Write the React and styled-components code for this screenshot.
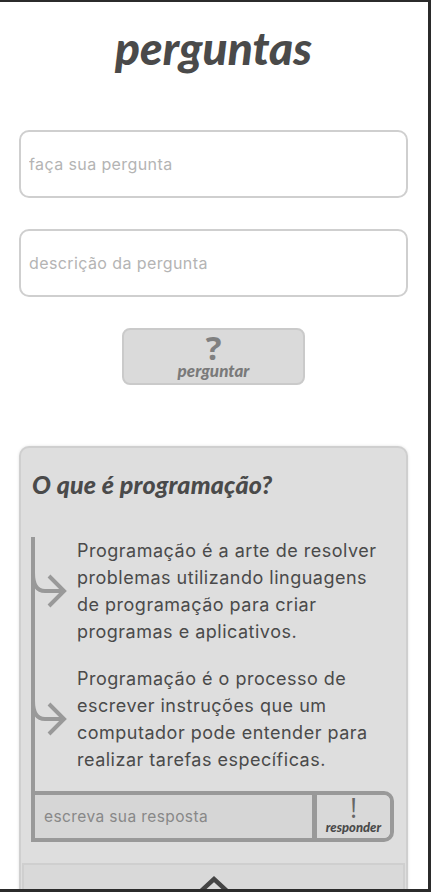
import styled, {createGlobalStyle} from 'styled-components'

const GlobalStyle = createGlobalStyle`
  html, body {
    margin: 0;
    padding: 0;
    background: #fff;
  }
  * {
    box-sizing: border-box;
  }
`

const answers = [
    'Programação é a arte de resolver problemas utilizando linguagens de programação para criar programas e aplicativos.',
    'Programação é o processo de escrever instruções que um computador pode entender para realizar tarefas específicas.',
]

const BranchArrow = () => (
    <svg width="42" height="40" viewBox="0 0 42 40">
        <path d="M2 2 Q2 20 14 20 L33 20" fill="none" stroke="#999" strokeWidth="4"/>
        <path d="M18 5 L33 20 L18 35" fill="none" stroke="#999" strokeWidth="4"/>
    </svg>
)

const App = () => {
    return (
        <Frame>
            <GlobalStyle/>
            <Title>perguntas</Title>
            <Form>
                <Field placeholder="faça sua pergunta"/>
                <Field placeholder="descrição da pergunta"/>
                <AskButton>
                    <Mark>?</Mark>
                    <ButtonLabel>perguntar</ButtonLabel>
                </AskButton>
            </Form>
            <Card>
                <CardTitle>O que é programação?</CardTitle>
                <Thread>
                    {answers.map((text, index) =>
                        <Answer key={index}>
                            <ArrowSlot><BranchArrow/></ArrowSlot>
                            <AnswerText>{text}</AnswerText>
                        </Answer>
                    )}
                    <Reply>
                        <ReplyInput placeholder="escreva sua resposta"/>
                        <ReplyButton>
                            <ReplyMark>!</ReplyMark>
                            <ReplyLabel>responder</ReplyLabel>
                        </ReplyButton>
                    </Reply>
                </Thread>
                <Collapse>
                    <svg width="34" height="20" viewBox="0 0 34 20">
                        <path d="M3 18 L17 5 L31 18" fill="none" stroke="#444" strokeWidth="4.5"/>
                    </svg>
                </Collapse>
            </Card>
        </Frame>
    )
}

export default App


const Frame = styled.div`
  height: 892px;
  overflow: hidden;
  border-top: 2px solid #2b2b2b;
  border-right: 3px solid #2b2b2b;
  border-bottom: 3px solid #2b2b2b;
  padding: 0 20px 0 19px;
  font-family: Inter, "Open Sans", sans-serif;
`

const Title = styled.h1`
  margin: 18px 0 0;
  text-align: center;
  font-family: Lato, sans-serif;
  font-weight: 900;
  font-style: italic;
  font-size: 46px;
  line-height: 56px;
  color: #4a4a4a;
`

const Form = styled.div`
  display: flex;
  flex-direction: column;
  align-items: center;
  gap: 31px;
  margin-top: 54px;
`

const Field = styled.input`
  width: 100%;
  height: 68px;
  border: 2px solid #cfcfcf;
  border-radius: 10px;
  padding: 0 8px;
  font-family: Inter, sans-serif;
  font-size: 16px;
  letter-spacing: 0.4px;
  color: #555;
  background: #fff;
  outline: none;

  &::placeholder {
    color: #b4b4b4;
  }
`

const AskButton = styled.button`
  width: 183px;
  height: 57px;
  background: #dadada;
  border: 2px solid #cacaca;
  border-radius: 8px;
  display: flex;
  flex-direction: column;
  align-items: center;
  padding: 2px 0 0;
`

const Mark = styled.span`
  font-family: "Open Sans", sans-serif;
  font-weight: 700;
  font-size: 33px;
  line-height: 31px;
  color: #808080;
`

const ButtonLabel = styled.span`
  font-family: Lato, sans-serif;
  font-weight: 900;
  font-style: italic;
  font-size: 17px;
  line-height: 16px;
  color: #7a7a7a;
`

const Card = styled.div`
  margin-top: 61px;
  background: #dedede;
  border: 2px solid #cfcfcf;
  border-radius: 10px;
  box-shadow: 0 0 3px rgba(0, 0, 0, 0.12);
  padding: 0 1px;
`

const CardTitle = styled.h2`
  margin: 0;
  padding: 20px 10px 0;
  font-family: Lato, sans-serif;
  font-weight: 900;
  font-style: italic;
  font-size: 25px;
  letter-spacing: 0.2px;
  line-height: 32px;
  color: #4a4a4a;
`

const Thread = styled.div`
  margin: 37px 11px 0 9px;
  border-left: 4px solid #999;
  display: flex;
  flex-direction: column;
`

const Answer = styled.div`
  display: flex;
  align-items: center;
  margin-bottom: 20px;
`

const ArrowSlot = styled.div`
  width: 46px;
  flex-shrink: 0;
  display: flex;
  margin-left: -4px;
`

const AnswerText = styled.p`
  margin: 0;
  font-size: 18px;
  letter-spacing: 0.5px;
  line-height: 27px;
  color: #4a4a4a;
`

const Reply = styled.div`
  display: flex;
  height: 51px;
  margin-top: -2px;
  margin-left: -4px;
  border: 4px solid #999;
  border-radius: 0 10px 10px 0;
  background: #d9d9d9;
`

const ReplyInput = styled.input`
  flex: 1;
  min-width: 0;
  border: none;
  border-right: 5px solid #999;
  background: #d6d6d6;
  padding: 0 9px;
  font-family: Inter, sans-serif;
  font-size: 15.5px;
  letter-spacing: 0.4px;
  outline: none;

  &::placeholder {
    color: #888;
  }
`

const ReplyButton = styled.button`
  width: 73px;
  border: none;
  border-radius: 0 6px 6px 0;
  background: #d9d9d9;
  display: flex;
  flex-direction: column;
  align-items: center;
  padding: 0;
`

const ReplyMark = styled.span`
  font-family: "Open Sans", sans-serif;
  font-size: 27px;
  line-height: 25px;
  font-weight: 500;
  color: #666;
`

const ReplyLabel = styled.span`
  font-family: Lato, sans-serif;
  font-weight: 900;
  font-style: italic;
  font-size: 13px;
  line-height: 15px;
  color: #4a4a4a;
`

const Collapse = styled.div`
  margin-top: 21px;
  height: 60px;
  background: #d9d9d9;
  border: 2px solid #cfcfcf;
  display: flex;
  justify-content: center;
  padding-top: 9px;
`
